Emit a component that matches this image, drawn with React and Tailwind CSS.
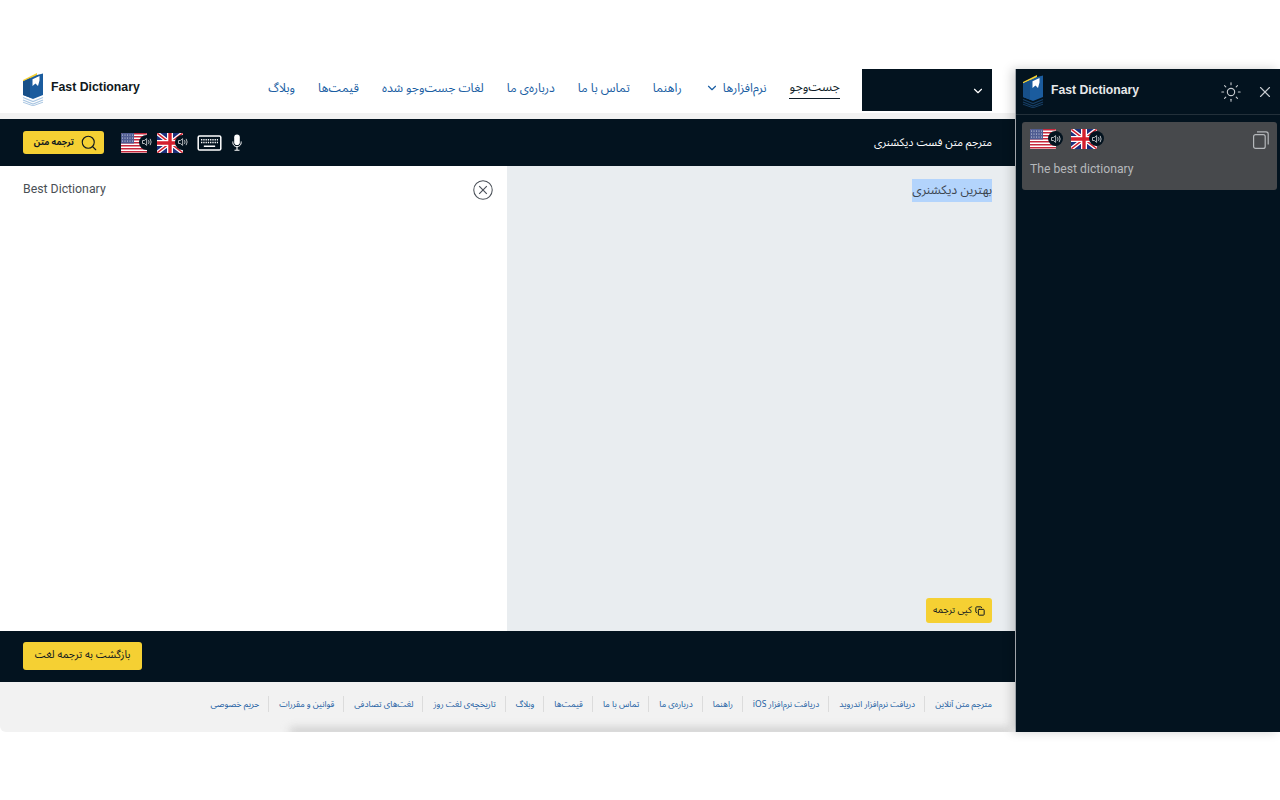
import React from 'react';
import { ChevronDown, Search, Sun, X, Copy } from 'lucide-react';

const FA = "font-['Noto_Sans_Arabic','Vazirmatn','DejaVu_Sans',sans-serif]";

const NAV = ['نرم‌افزارها', 'راهنما', 'تماس با ما', 'درباره‌ی ما', 'لغات جست‌وجو شده', 'قیمت‌ها', 'وبلاگ'];
const FOOTER = [
  'مترجم متن آنلاین',
  'دریافت نرم‌افزار اندروید',
  'دریافت نرم‌افزار iOS',
  'راهنما',
  'درباره‌ی ما',
  'تماس با ما',
  'قیمت‌ها',
  'وبلاگ',
  'تاریخچه‌ی لغت روز',
  'لغت‌های تصادفی',
  'قوانین و مقررات',
  'حریم خصوصی',
];

function Logo({ dark }) {
  const line = dark ? '#173f66' : '#a9c6e2';
  return (
    <svg viewBox="0 0 22 34" className="w-[22px] h-[34px] shrink-0">
      <path d="M1 8 L15 1 L15 3.5 L1 10 Z" fill="#f5d033" />
      <path d="M1 9.5 L15 3 L21 1.5 L21 23 L11 27 L1 23 Z" fill="#1b5c9e" />
      <path d="M1 9.5 L8 6.2 L8 25.5 L1 23 Z" fill="#174f88" />
      <path d="M10.5 7.2 L17.5 4 L17.5 8.5 L16 14 L13.5 11.5 L10.5 14 Z" fill="#fff" />
      <path d="M1 25.5 L11 29.5 L21 25.5" fill="none" stroke={line} strokeWidth="1.3" />
      <path d="M1 28 L11 32 L21 28" fill="none" stroke={line} strokeWidth="1.3" />
      <path d="M1 30.2 L11 33.8 L21 30.2" fill="none" stroke={line} strokeWidth="1" />
    </svg>
  );
}

function UsFlag() {
  return (
    <svg viewBox="0 0 26 20" className="w-[26px] h-[20px] rounded-[1px]">
      <rect width="26" height="20" fill="#fff" />
      {[0, 3, 6, 9, 12, 15, 18].map((y) => (
        <rect key={y} y={y} width="26" height="1.5" fill="#c8283c" />
      ))}
      <rect width="13" height="10.5" fill="#4f5c92" />
      {[2, 5, 8].map((y) =>
        [1.5, 4, 6.5, 9, 11.5].map((x) => <circle key={`${x}-${y}`} cx={x} cy={y} r="0.55" fill="#dfe2ee" />)
      )}
    </svg>
  );
}

function UkFlag() {
  return (
    <svg viewBox="0 0 26 20" className="w-[26px] h-[20px] rounded-[1px]">
      <rect width="26" height="20" fill="#1b2f7c" />
      <path d="M0 0 L26 20 M26 0 L0 20" stroke="#fff" strokeWidth="4" />
      <path d="M0 0 L26 20 M26 0 L0 20" stroke="#d4202e" strokeWidth="1.4" />
      <path d="M13 0 V20 M0 10 H26" stroke="#fff" strokeWidth="6" />
      <path d="M13 0 V20 M0 10 H26" stroke="#d4202e" strokeWidth="3.4" />
    </svg>
  );
}

function Speaker() {
  return (
    <span className="flex items-center justify-center w-[15px] h-[15px] rounded-full bg-[#03131f] absolute right-[-7px] top-[2px]">
      <svg viewBox="0 0 16 16" className="w-[12px] h-[12px]" fill="none" stroke="#b9bdc1" strokeWidth="1.3">
        <path d="M2 6 H4.5 L7.5 3.5 V12.5 L4.5 10 H2 Z" />
        <path d="M10 5.5 Q11.5 8 10 10.5" />
        <path d="M12.2 3.8 Q14.8 8 12.2 12.2" />
      </svg>
    </span>
  );
}

function FlagSpeaker({ children }) {
  return (
    <span className="relative block w-[26px] h-[20px]">
      {children}
      <Speaker />
    </span>
  );
}

function Keyboard() {
  return (
    <svg viewBox="0 0 26 17" className="w-[25px] h-[16px]" fill="none">
      <rect x="1" y="1" width="24" height="15" rx="1.5" stroke="#fff" strokeWidth="1.6" />
      <path d="M4 5 H22 M4 8 H22" stroke="#fff" strokeWidth="1.5" strokeDasharray="1.4 1" />
      <path d="M7 12 H19" stroke="#fff" strokeWidth="1.6" />
    </svg>
  );
}

function MicIcon() {
  return (
    <svg viewBox="0 0 10 17" className="w-[10px] h-[17px]" fill="none">
      <rect x="2.2" y="0.5" width="5.6" height="10.5" rx="2.8" fill="#fff" />
      <path d="M0.8 7.5 V8.5 A4.2 4.2 0 0 0 9.2 8.5 V7.5" stroke="#fff" strokeWidth="1" />
      <path d="M5 12.8 V16 M2.5 16.2 H7.5" stroke="#fff" strokeWidth="1.1" />
    </svg>
  );
}

function ClearIcon() {
  return (
    <svg viewBox="0 0 21 21" className="w-[20px] h-[20px]" fill="none" stroke="#4a5058" strokeWidth="1.1">
      <circle cx="10.5" cy="10.5" r="9.7" />
      <path d="M6.5 6.5 L14.5 14.5 M14.5 6.5 L6.5 14.5" strokeWidth="1.2" />
    </svg>
  );
}

function CopyTall() {
  return (
    <svg viewBox="0 0 16 18" className="w-[16px] h-[18px]" fill="none" stroke="#b5b8bb" strokeWidth="1.2">
      <rect x="0.6" y="3.6" width="11.6" height="13.8" rx="2" />
      <path d="M4 0.8 H13 A2.2 2.2 0 0 1 15.2 3 V13.5" />
    </svg>
  );
}

export default function App() {
  return (
    <div className="w-[1280px] h-[800px] bg-white overflow-hidden flex flex-col">
      <div className="h-[69px] shrink-0" />

      <div className="h-[663px] flex">
        {/* main page */}
        <div dir="rtl" className={`w-[1016px] flex flex-col rounded-bl-[6px] overflow-hidden border-r border-[#b9bec3] ${FA}`}>
          <header className="h-[50px] shrink-0 bg-white border-b-[6px] border-[#f2f2f2] flex pr-[23px] pl-[23px]">
            <div className="w-[130px] h-[42px] bg-[#03131f] flex items-center shrink-0" dir="ltr">
              <span className="ml-auto mr-[7px] mt-[2px]">
                <ChevronDown className="w-[14px] h-[14px] text-white" strokeWidth={2} />
              </span>
            </div>
            <nav className="flex items-center h-[38px] mr-[22px] gap-[23px]">
              <a className="text-[12.5px] text-[#0e1c28] border-b-[1.5px] border-[#0e1c28] leading-[20px] pb-[1px]">جست‌وجو</a>
              {NAV.map((item, i) => (
                <a key={item} className="text-[12.2px] text-[#1a5ea3] leading-[20px] flex items-center gap-[4px]">
                  {item}
                  {i === 0 && <ChevronDown className="w-[14px] h-[14px]" strokeWidth={2} />}
                </a>
              ))}
            </nav>
            <div dir="ltr" className="mr-auto -ml-[1px] flex items-center gap-[7px] h-[40px]">
              <Logo />
              <span className="font-['Liberation_Sans',sans-serif] font-bold text-[12.3px] text-[#101820] -mt-[4px]">
                Fast Dictionary
              </span>
            </div>
          </header>

          <div className="h-[47px] shrink-0 bg-[#03131f] flex items-center justify-between pr-[23px] pl-[23px]">
            <span className="text-[10.9px] text-white mt-[1px]">مترجم متن فست دیکشنری</span>
            <div className="flex items-center gap-[14px]">
              <div className="flex items-center gap-[10px]">
                <MicIcon />
                <Keyboard />
              </div>
              <div className="flex items-center gap-[10px]" dir="ltr">
                <FlagSpeaker><UsFlag /></FlagSpeaker>
                <FlagSpeaker><UkFlag /></FlagSpeaker>
              </div>
              <button className="w-[81px] h-[23px] mr-[3px] pr-[6px] bg-[#f5d033] rounded-[3px] flex items-center gap-[6px] text-[8.7px] font-bold text-[#101820]">
                <Search className="w-[18px] h-[18px]" strokeWidth={1.5} />
                ترجمه متن
              </button>
            </div>
          </div>

          <div className="h-[465px] shrink-0 flex">
            <div className="w-[508px] bg-[#e9edf0] flex flex-col justify-between pr-[23px] pl-[23px] pt-[11px] pb-[8px]">
              <div>
                <span className="inline-block text-[12.4px] leading-[23px] text-[#3c4650] bg-[#b3d4fc]">بهترین دیکشنری</span>
              </div>
              <button className="self-start w-[66px] h-[25px] bg-[#f5d033] rounded-[3px] flex items-center justify-center gap-[3px] text-[9.5px] text-[#101820]">
                <Copy className="w-[10px] h-[10px]" strokeWidth={2.4} />
                کپی ترجمه
              </button>
            </div>
            <div className="flex-1 bg-white flex justify-between pr-[14px] pl-[23px] pt-[14px]">
              <ClearIcon />
              <span dir="ltr" className="font-['Roboto',sans-serif] text-[12.3px] leading-[18px] text-[#4a4f55]">
                Best Dictionary
              </span>
            </div>
          </div>

          <div className="h-[51px] shrink-0 bg-[#03131f] flex items-center justify-end pl-[23px] pb-[2px]">
            <button className="w-[119px] h-[28px] bg-[#f5d033] rounded-[3px] text-[10.7px] text-[#101820]">
              بازگشت به ترجمه لغت
            </button>
          </div>

          <footer className="relative flex-1 bg-[#f2f2f2] flex items-center pr-[23px] pb-[6px] overflow-hidden">
            {FOOTER.map((item, i) => (
              <a
                key={item}
                className={`text-[8.5px] leading-[16px] text-[#1a5ea3] pl-[10px] ${i === 0 ? '' : 'pr-[9px] border-r border-[#dcdcdc]'}`}
              >
                {item}
              </a>
            ))}
            <span className="absolute -bottom-[3px] left-[290px] right-[5px] h-[7px] bg-[#c8c8c8] blur-[4px]" />
          </footer>
        </div>

        {/* side panel */}
        <aside className="relative z-10 flex-1 bg-[#03131f] shadow-[-4px_0_10px_rgba(0,0,0,0.18)]">
          <div className="h-[46px] flex items-center border-b border-[#23303a] pl-[6px] pr-[6px]">
            <span className="-mt-[1px]"><Logo dark /></span>
            <span className="ml-[7px] -mt-[2px] font-['Liberation_Sans',sans-serif] font-bold text-[12.2px] text-[#e6e8ea]">
              Fast Dictionary
            </span>
            <Sun className="ml-auto w-[22px] h-[22px] text-[#c8ccd0]" strokeWidth={1.2} />
            <X className="ml-[14px] w-[18px] h-[18px] text-[#c8ccd0]" strokeWidth={1.5} />
          </div>
          <div className="ml-[6px] mr-[3px] mt-[7px] h-[68px] bg-[#47494c] rounded-[3px] pl-[8px] pr-[8px] pt-[7px]">
            <div className="flex items-start">
              <FlagSpeaker><UsFlag /></FlagSpeaker>
              <span className="ml-[15px]">
                <FlagSpeaker><UkFlag /></FlagSpeaker>
              </span>
              <span className="ml-auto mt-[2px]"><CopyTall /></span>
            </div>
            <p className="mt-[11px] font-['Roboto',sans-serif] text-[12.2px] leading-[18px] text-[#b5b8bb]">
              The best dictionary
            </p>
          </div>
        </aside>
      </div>
    </div>
  );
}
